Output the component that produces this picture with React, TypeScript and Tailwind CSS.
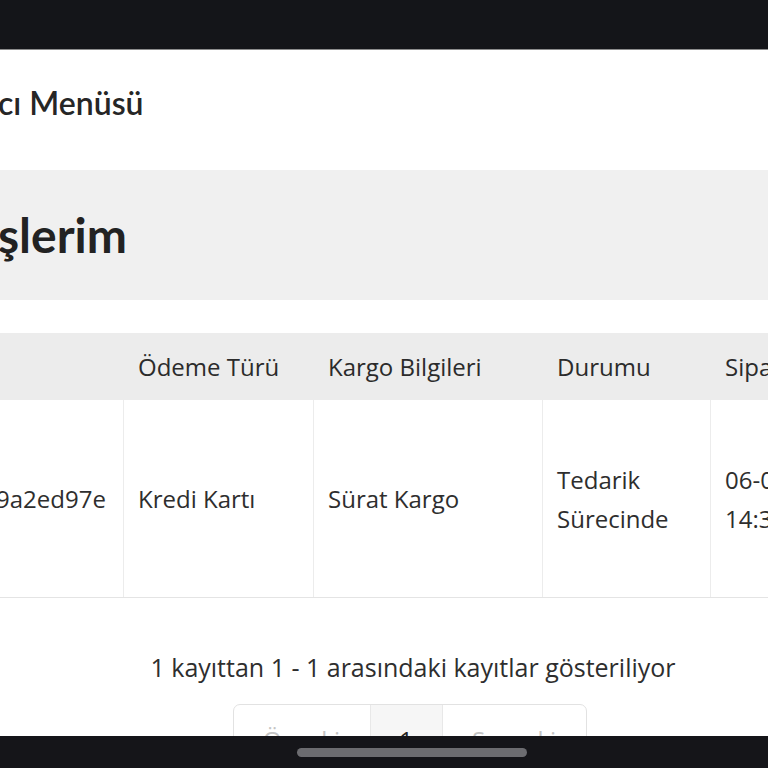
import React from 'react';

const titleFont = { fontFamily: 'Lato, "Noto Sans", sans-serif' };
const bodyFont = { fontFamily: '"Open Sans", "Noto Sans", sans-serif' };

type Col = { label: string; lines: string[]; width: string; shift?: boolean };

const columns: Col[] = [
  { label: '', lines: ['9a2ed97e'], width: 'w-[123px]', shift: true },
  { label: 'Ödeme Türü', lines: ['Kredi Kartı'], width: 'w-[190px]' },
  { label: 'Kargo Bilgileri', lines: ['Sürat Kargo'], width: 'w-[229px]' },
  { label: 'Durumu', lines: ['Tedarik', 'Sürecinde'], width: 'w-[168px]' },
  { label: 'Sipariş Tarihi', lines: ['06-06-2023', '14:32'], width: 'w-[180px]' },
];

function OrdersTable() {
  return (
    <div className="flex flex-col w-[890px] shrink-0" style={bodyFont}>
      {/* Header row */}
      <div className="flex h-[67px] bg-[#ececec]">
        {columns.map((c) => (
          <div
            key={c.label || 'no'}
            className={`${c.width} shrink-0 flex items-center pl-[15px] text-[24px] text-[#2b2b2b] whitespace-nowrap`}
          >
            {c.label}
          </div>
        ))}
      </div>
      {/* Body row */}
      <div className="flex h-[198px] border-b border-[#e4e4e4]">
        {columns.map((c, i) => (
          <div
            key={c.lines[0]}
            className={`${c.width} shrink-0 flex items-center text-[24px] leading-[39px] text-[#2e2e2e] whitespace-nowrap ${
              i > 0 ? 'border-l border-[#ececec] pl-[14px]' : ''
            }`}
          >
            <div className={`flex flex-col ${c.shift ? 'ml-[-4px]' : ''}`}>
              {c.lines.map((l) => (
                <span key={l}>{l}</span>
              ))}
            </div>
          </div>
        ))}
      </div>
    </div>
  );
}

function Pagination() {
  return (
    <div className="flex justify-center mt-[24px] pl-[51px]" style={bodyFont}>
      <div className="flex border border-[#e2e2e2] rounded-[7px] overflow-hidden text-[24px]">
        <div className="w-[136px] h-[70px] flex items-center justify-center text-[#c4c4c4]">
          Önceki
        </div>
        <div className="w-[73px] h-[70px] flex items-center justify-center bg-[#f6f6f6] border-x border-[#e8e8e8] text-[#222]">
          1
        </div>
        <div className="w-[143px] h-[70px] flex items-center justify-center text-[#c4c4c4]">
          Sonraki
        </div>
      </div>
    </div>
  );
}

export default function App() {
  return (
    <div className="h-[768px] w-[768px] flex flex-col overflow-hidden bg-white" style={titleFont}>
      {/* Status bar area */}
      <div className="h-[50px] shrink-0 bg-[#141519] border-b border-[#8c8c8c]" />

      <div className="flex-1 flex flex-col overflow-hidden">
        {/* Menu title */}
        <div className="h-[120px] shrink-0 flex items-center pb-[14px]">
          <span className="ml-[-2px] text-[32px] font-semibold text-[#262626] whitespace-nowrap">
            cı Menüsü
          </span>
        </div>

        {/* Page title band */}
        <div className="h-[130px] shrink-0 flex items-center bg-[#f0f0f0]">
          <span className="ml-[-2px] text-[48px] font-bold text-[#222] whitespace-nowrap">
            şlerim
          </span>
        </div>

        <div className="h-[33px] shrink-0" />

        <OrdersTable />

        {/* Footer info */}
        <div
          className="mt-[56px] leading-[26px] shrink-0 text-center pl-[58px] text-[25px] text-[#2e2e2e] whitespace-nowrap"
          style={bodyFont}
        >
          1 kayıttan 1 - 1 arasındaki kayıtlar gösteriliyor
        </div>

        <Pagination />
      </div>

      {/* Home indicator bar */}
      <div className="h-[32px] shrink-0 bg-[#151519] flex items-center justify-center">
        <div className="w-[230px] h-[9px] rounded-full bg-[#6c6c70] ml-[56px]" />
      </div>
    </div>
  );
}
